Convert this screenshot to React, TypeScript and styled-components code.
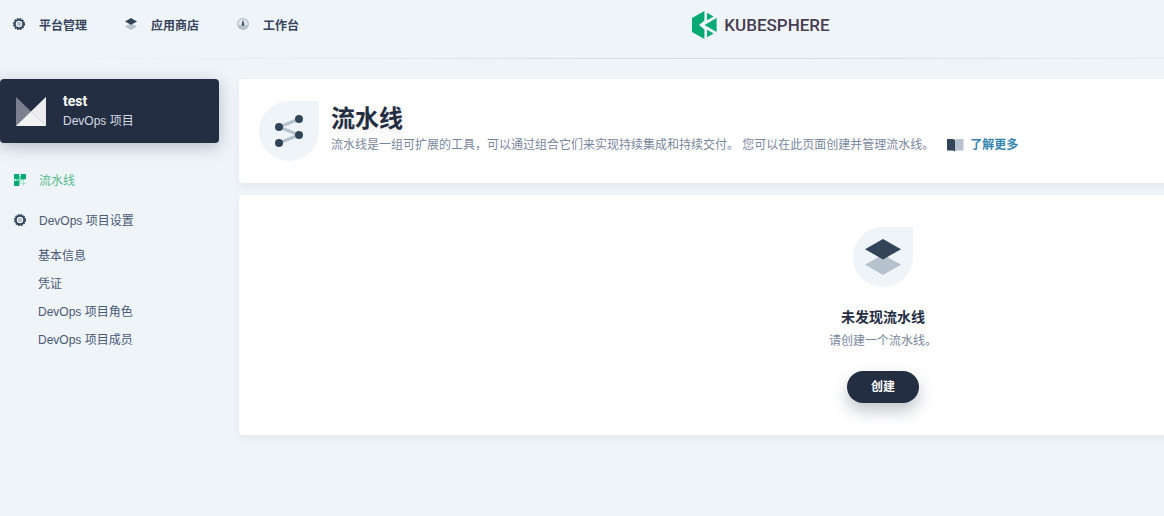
import React from 'react';
import styled, { createGlobalStyle } from 'styled-components';

const GlobalStyle = createGlobalStyle`
  *, *::before, *::after { box-sizing: border-box; }
  html { background: #eff4f9; }
  body {
    margin: 0;
    font: 400 12px/20px "Liberation Sans", "Noto Sans CJK SC", sans-serif;
    color: #36435c;
  }
  h1, h2, p, ul { margin: 0; padding: 0; }
  ul { list-style: none; }
  a { color: inherit; text-decoration: none; }
  svg { display: block; flex: none; }
`;

const Viewport = styled.div`
  overflow: hidden;
`;

const Page = styled.div`
  min-width: 1547px;
  min-height: 100vh;
  padding-right: 20px;
`;

const Header = styled.header`
  display: grid;
  grid-template-columns: 1fr auto 1fr;
  padding: 0 8px 0 11px;
`;

const TopNav = styled.nav`
  display: flex;
  align-items: center;
  gap: 36px;
  height: 52px;
`;

const TopLink = styled.a`
  display: flex;
  align-items: center;
  gap: 12px;
  font-weight: 700;

  svg { margin-bottom: 4px; }
`;

const Brand = styled.a`
  display: flex;
  align-items: center;
  gap: 7px;
  height: 50px;
  padding-right: 8px;
  font: 500 17px/24px Roboto, sans-serif;
  color: #483d52;
`;

const Divider = styled.hr`
  height: 1px;
  margin: 6px 0 20px;
  border: 0;
  background: linear-gradient(to right, rgba(212, 218, 225, 0) 5%, #d4dae1 45%, rgba(212, 218, 225, 0));
`;

const Columns = styled.div`
  display: flex;
  align-items: flex-start;
  gap: 20px;
`;

const Sidebar = styled.aside`
  flex: none;
  width: 219px;
`;

const ProjectCard = styled.a`
  display: flex;
  align-items: center;
  gap: 16px;
  height: 64px;
  padding: 0 15px;
  border-radius: 4px;
  background: #242e42;
  box-shadow: 0 4px 16px rgba(39, 50, 71, 0.28);
  color: #d5dbe3;
`;

const ProjectName = styled.strong`
  display: block;
  font: 700 14px/20px Roboto, sans-serif;
  color: #fff;
`;

const SideNav = styled.nav`
  padding: 28px 12px 0;
  color: #4a5974;
`;

const SideLink = styled.a<{ $active?: boolean }>`
  display: flex;
  align-items: center;
  gap: 11px;
  margin-bottom: 20px;
  color: ${({ $active }) => ($active ? '#55bc8a' : 'inherit')};

  svg { margin-bottom: 2px; }
`;

const SubList = styled.ul`
  display: grid;
  gap: 8px;
  margin-top: -5px;
  padding-left: 26px;
`;

const Main = styled.main`
  display: grid;
  flex: 1;
  gap: 12px;
`;

const Panel = styled.section`
  border-radius: 4px;
  background: #fff;
  box-shadow: 0 4px 8px rgba(36, 46, 66, 0.06);
`;

const Banner = styled(Panel)`
  display: flex;
  gap: 12px;
  padding: 22px 20px;
`;

const IconDrop = styled.span`
  display: grid;
  flex: none;
  place-items: center;
  width: 60px;
  height: 60px;
  border-radius: 50% 0 50% 50%;
  background: #eff4f9;
`;

const BannerText = styled.div`
  padding-top: 2px;
`;

const Title = styled.h1`
  font-size: 24px;
  font-weight: 700;
  line-height: 32px;
  color: #242e42;
  text-shadow: 0 4px 8px rgba(36, 46, 66, 0.1);
`;

const Description = styled.p`
  display: flex;
  align-items: center;
  gap: 12px;
  color: #79879c;
`;

const LearnMore = styled.a`
  display: flex;
  align-items: center;
  gap: 6px;
  font-weight: 700;
  color: #3385b0;
`;

const Empty = styled(Panel)`
  display: flex;
  flex-direction: column;
  align-items: center;
  padding: 32px 20px;
`;

const EmptyTitle = styled.h2`
  margin-top: 20px;
  font-size: 14px;
  line-height: 20px;
  color: #242e42;
`;

const EmptyText = styled.p`
  margin: 4px 0 20px;
  color: #79879c;
`;

const CreateButton = styled.button`
  height: 32px;
  padding: 0 24px;
  border: 0;
  border-radius: 16px;
  background: #242e42;
  box-shadow: 0 8px 16px rgba(35, 45, 65, 0.28);
  font: inherit;
  font-weight: 700;
  color: #fff;
  cursor: pointer;
`;

const GearIcon = () => (
  <svg width="16" height="16" viewBox="0 0 16 16" aria-hidden="true">
    <circle cx="8" cy="8" r="5.4" fill="none" stroke="#324558" strokeWidth="1.4" strokeDasharray="1.7 1.127" />
    <circle cx="8" cy="8" r="4.2" fill="none" stroke="#324558" strokeWidth="1.9" />
    <circle cx="8" cy="8" r="2.2" fill="#b6c2cd" />
  </svg>
);

const LayersIcon = ({ size }: { size: number }) => (
  <svg width={size} height={size} viewBox="0 0 16 16" aria-hidden="true">
    <path d="M8 7.2 14 10.6 8 14 2 10.6Z" fill="#b6c2cd" />
    <path d="M8 2 14 5.4 8 8.8 2 5.4Z" fill="#324558" />
  </svg>
);

const DashboardIcon = () => (
  <svg width="16" height="16" viewBox="0 0 16 16" aria-hidden="true">
    <circle cx="8" cy="8" r="6" fill="#b6c2cd" />
    <path d="M3.4 9A4.7 4.7 0 1 1 12.6 9Z" fill="#e3e9ef" />
    <path d="M8 4.6 9 8.6a1 1 0 1 1-2 0Z" fill="#324558" stroke="#324558" strokeWidth=".5" />
  </svg>
);

const PipelineMenuIcon = () => (
  <svg width="16" height="16" viewBox="0 0 16 16" aria-hidden="true">
    <path d="M4 4h8v4.5H8.5V12H4z" fill="#90e0c5" />
    <path d="M2 2h5.2v5.2H2zM8.8 2H14v5.2H8.8zM2 8.8h5.2V14H2z" fill="#00aa72" />
    <path d="M11.5 9.3v4M9.5 11.3h4" stroke="#90e0c5" />
  </svg>
);

const ProjectIcon = () => (
  <svg width="32" height="32" viewBox="0 0 32 32" aria-hidden="true">
    <path d="M1 2 16 16.5 1 31Z" fill="#7c8190" />
    <path d="M31 2v29L16 16.5Z" fill="#e6e7e9" />
    <path d="M1 31 16 16.5 31 31Z" fill="#f2f2f3" />
    <path d="M1 31 31 2v29Z" fill="#f2f2f3" fillOpacity=".5" />
  </svg>
);

const ShareIcon = () => (
  <svg width="48" height="48" viewBox="0 0 48 48" aria-hidden="true">
    <path d="M34 12 14 20 34 28 14 36" fill="none" stroke="#b6c2cd" strokeWidth="3" />
    <g fill="#324558">
      <circle cx="34" cy="12" r="4" />
      <circle cx="14" cy="20" r="4" />
      <circle cx="34" cy="28" r="4" />
      <circle cx="14" cy="36" r="4" />
    </g>
  </svg>
);

const BookIcon = () => (
  <svg width="18" height="14" viewBox="0 0 18 14" aria-hidden="true">
    <path d="M9 2Q10 1 12 1h5.5v11.5H12Q10 12.5 9 13.5Z" fill="#b6c2cd" />
    <path d="M1 1h5Q8 1 9 2v11.5Q8 12.5 6 12.5H1Z" fill="#324558" />
  </svg>
);

const LogoMark = () => (
  <svg width="25" height="28" viewBox="0 0 25 28" aria-hidden="true">
    <path d="M12.4 0v9.5L7 14l5.4 4.5V28L0 21V7Z" fill="#00aa72" />
    <path d="M15 1.8 21.6 5.4 15 9.2ZM15 18.8 21.6 22.6 15 26.2ZM24.6 7v14L12.6 14Z" fill="#00aa72" />
  </svg>
);

const settings = ['基本信息', '凭证', 'DevOps 项目角色', 'DevOps 项目成员'];

export default function App() {
  return (
    <Viewport>
      <GlobalStyle />
      <Page>
        <Header>
          <TopNav>
            <TopLink href="#platform"><GearIcon />平台管理</TopLink>
            <TopLink href="#apps"><LayersIcon size={16} />应用商店</TopLink>
            <TopLink href="#workbench"><DashboardIcon />工作台</TopLink>
          </TopNav>
          <Brand href="#home"><LogoMark />KUBESPHERE</Brand>
        </Header>
        <Divider />
        <Columns>
          <Sidebar>
            <ProjectCard href="#project">
              <ProjectIcon />
              <span>
                <ProjectName>test</ProjectName>
                DevOps 项目
              </span>
            </ProjectCard>
            <SideNav>
              <SideLink href="#pipelines" $active><PipelineMenuIcon />流水线</SideLink>
              <SideLink href="#settings"><GearIcon />DevOps 项目设置</SideLink>
              <SubList>
                {settings.map((name) => (
                  <li key={name}><a href="#settings">{name}</a></li>
                ))}
              </SubList>
            </SideNav>
          </Sidebar>
          <Main>
            <Banner>
              <IconDrop><ShareIcon /></IconDrop>
              <BannerText>
                <Title>流水线</Title>
                <Description>
                  流水线是一组可扩展的工具，可以通过组合它们来实现持续集成和持续交付。 您可以在此页面创建并管理流水线。
                  <LearnMore href="#docs"><BookIcon />了解更多</LearnMore>
                </Description>
              </BannerText>
            </Banner>
            <Empty>
              <IconDrop><LayersIcon size={48} /></IconDrop>
              <EmptyTitle>未发现流水线</EmptyTitle>
              <EmptyText>请创建一个流水线。</EmptyText>
              <CreateButton type="button">创建</CreateButton>
            </Empty>
          </Main>
        </Columns>
      </Page>
    </Viewport>
  );
}
